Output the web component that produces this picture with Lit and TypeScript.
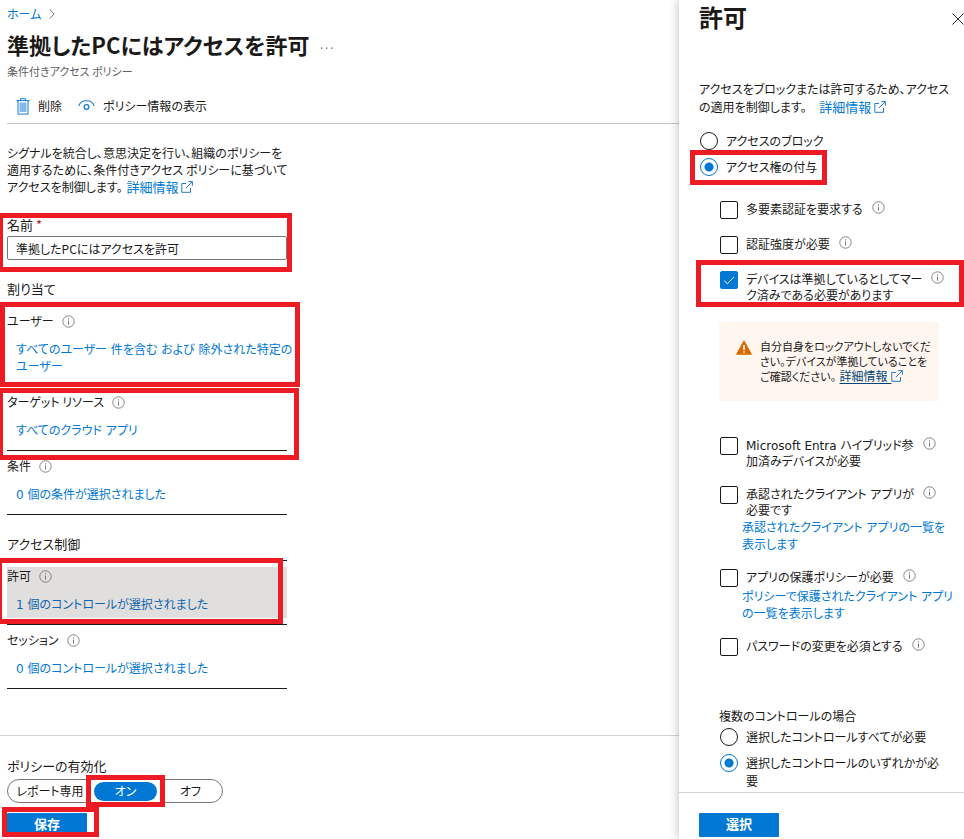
import { LitElement, html, css } from "lit";
import { customElement, property } from "lit/decorators.js";

const infoIcon = html`<svg class="info" width="13" height="13" viewBox="0 0 13 13" aria-hidden="true">
  <circle cx="6.5" cy="6.5" r="5.7" fill="none" stroke="#7a7876" stroke-width="0.9" />
  <rect x="6" y="5.6" width="1" height="4" fill="#7a7876" />
  <rect x="6" y="3.3" width="1" height="1.2" fill="#7a7876" />
</svg>`;

const outIcon = html`<svg class="out" width="12" height="12" viewBox="0 0 12 12" aria-hidden="true">
  <path d="M5 2.5H0.8V11.3H9.5V7M7.3 0.6H11.4V4.7M11.2 0.8L4.8 7.2" fill="none" stroke="#0f6cbd" stroke-width="0.9" />
</svg>`;

const shared = css`
  * {
    box-sizing: border-box;
  }
  .info,
  .out {
    flex: none;
    vertical-align: -1px;
  }
  a {
    color: #0078d4;
    text-decoration: none;
  }
  .more {
    margin-left: 4px;
    font-size: 13px;
  }
  p,
  h1,
  h2,
  h3 {
    margin: 0;
  }
  button,
  input {
    font: inherit;
    font-feature-settings: inherit;
    margin: 0;
  }
  button {
    border: 0;
    padding: 0;
    background: none;
    color: inherit;
  }
  .mark {
    position: absolute;
    border: 5px solid #ed1c24;
    pointer-events: none;
    z-index: 2;
  }
  .primary {
    width: 80px;
    height: 24px;
    padding-bottom: 2px;
    background: #0078d4;
    color: #fff;
    font-size: 13px;
    font-weight: 700;
    border-radius: 1px;
  }
`;

@customElement("policy-item")
class PolicyItem extends LitElement {
  @property() label = "";
  @property({ type: Boolean }) active = false;

  static styles = [
    shared,
    css`
      :host {
        display: block;
        padding: 6px 0;
        border-bottom: 1px solid #1b1a19;
        position: relative;
      }
      .box {
        padding-bottom: 4px;
      }
      .active {
        background: #e1dfdd;
      }
      .head {
        display: flex;
        align-items: center;
        gap: 8px;
        height: 18px;
      }
      .value {
        padding: 12px 0 0 9px;
        line-height: 17px;
        color: #0078d4;
        font-family: "DejaVu Sans", "Noto Sans CJK JP", sans-serif;
      }
    `,
  ];

  render() {
    return html`<div class="box ${this.active ? "active" : ""}">
        <div class="head"><span>${this.label}</span>${infoIcon}</div>
        <div class="value"><slot></slot></div>
      </div>
      <slot name="mark"></slot>`;
  }
}

@customElement("policy-page")
class PolicyPage extends LitElement {
  static styles = [
    shared,
    css`
      :host {
        display: flex;
        flex-direction: column;
        min-width: 0;
      }
      nav {
        display: flex;
        align-items: center;
        gap: 8px;
        height: 28px;
        padding-left: 7px;
      }
      .title {
        display: flex;
        align-items: center;
        gap: 12px;
        height: 34px;
        padding: 0 0 2px 7px;
      }
      h1 {
        font-size: 22px;
        font-weight: 700;
        line-height: 32px;
      }
      .sub {
        padding-left: 7px;
        font-size: 11px;
        line-height: 18px;
        color: #605e5c;
      }
      .tools {
        display: flex;
        gap: 16px;
        height: 44px;
        margin-left: 7px;
        padding: 8px 0 0 9px;
        border-bottom: 1px solid #c8c6c4;
      }
      .tools button {
        display: flex;
        align-items: center;
        gap: 8px;
        height: 36px;
      }
      .content {
        flex: 1;
        width: 280px;
        margin-left: 7px;
        padding-top: 20px;
      }
      .intro {
        line-height: 17px;
      }
      .field {
        position: relative;
        padding-top: 21px;
      }
      .field label {
        display: block;
        height: 20px;
        font-size: 13px;
        line-height: 18px;
      }
      .req {
        color: #a4262c;
      }
      .field input {
        display: block;
        width: 100%;
        height: 24px;
        padding: 0 8px;
        border: 1px solid #7a7876;
        border-radius: 2px;
        color: #1b1a19;
      }
      h2 {
        padding: 20px 0 7px;
        font-size: 13px;
        font-weight: 400;
        line-height: 18px;
        border-bottom: 1px solid #1b1a19;
      }
      .active-link {
        color: #1066b0;
      }
      footer {
        padding: 21px 0 2px 7px;
        border-top: 1px solid #d6d4d2;
      }
      .legend {
        font-size: 13px;
        line-height: 18px;
      }
      .pill {
        display: flex;
        align-items: center;
        gap: 2px;
        width: 216px;
        height: 24px;
        margin: 4px 0 10px;
        border: 1px solid #7a7876;
        border-radius: 12px;
      }
      .pill button {
        flex: 1;
        height: 19px;
        border-radius: 10px;
      }
      .pill .report {
        flex: none;
        width: 84px;
      }
      .pill .on {
        background: #0078d4;
        color: #fff;
      }
      .slot {
        position: relative;
        display: flex;
        flex: 1;
      }
      .save {
        position: relative;
        width: 80px;
      }
      .m-name {
        inset: 18px -5px -12px -9px;
      }
      .m-users {
        inset: -4px -13px -1px -7px;
      }
      .m-target {
        inset: 1px -12px -10px -9px;
      }
      .m-grant {
        inset: -3px 4px 0 -10px;
      }
      .m-on {
        inset: -7px -8px -6px -8px;
      }
      .m-save {
        inset: -6px -12px 0 -5px;
      }
    `,
  ];

  render() {
    return html`
      <nav>
        <a href="#">ホーム</a>
        <svg width="6" height="10" viewBox="0 0 6 10" aria-hidden="true">
          <path d="M0.7 0.5L5.2 5L0.7 9.5" fill="none" stroke="#605e5c" stroke-width="0.9" />
        </svg>
      </nav>
      <div class="title">
        <h1>準拠したPCにはアクセスを許可</h1>
        <button aria-label="その他">
          <svg width="12" height="2" viewBox="0 0 12 2" aria-hidden="true">
            <path d="M0 0.5h1.4v1.2H0zM5 0.5h1.4v1.2H5zM10 0.5h1.4v1.2H10z" fill="#605e5c" />
          </svg>
        </button>
      </div>
      <p class="sub">条件付きアクセス ポリシー</p>
      <div class="tools">
        <button>
          <svg width="14" height="17" viewBox="0 0 14 17" aria-hidden="true">
            <path d="M3.5 4.5h7v9.5h-7z" fill="#83b9e8" />
            <path d="M0.5 2.6h13M4.5 2.4V0.7h5v1.7M2 2.6v13.5h10V2.6" fill="none" stroke="#0f7cd4" stroke-width="1" />
          </svg>
          削除
        </button>
        <button>
          <svg width="17" height="12" viewBox="0 0 17 12" aria-hidden="true">
            <path d="M0.8 6C1.8 2.3 4.8 0.7 8.5 0.7S15.2 2.3 16.2 6" fill="none" stroke="#0f7cd4" stroke-width="1.1" />
            <circle cx="8.5" cy="7" r="2.4" fill="none" stroke="#0f7cd4" stroke-width="1.2" />
          </svg>
          ポリシー情報の表示
        </button>
      </div>
      <div class="content">
        <p class="intro">
          シグナルを統合し、意思決定を行い、組織のポリシーを<br />適用するために、条件付きアクセス ポリシーに基づいて<br />アクセスを制御します。<a class="more" href="#">詳細情報 ${outIcon}</a>
        </p>
        <div class="field">
          <label for="name">名前 <span class="req">*</span></label>
          <input id="name" type="text" value="準拠したPCにはアクセスを許可" />
          <span class="mark m-name"></span>
        </div>
        <h2>割り当て</h2>
        <policy-item label="ユーザー">
          <a href="#">すべてのユーザー 件を含む および 除外された特定の<br />ユーザー</a>
          <span slot="mark" class="mark m-users"></span>
        </policy-item>
        <policy-item label="ターゲット リソース">
          <a href="#">すべてのクラウド アプリ</a>
          <span slot="mark" class="mark m-target"></span>
        </policy-item>
        <policy-item label="条件"><a href="#">0 個の条件が選択されました</a></policy-item>
        <h2>アクセス制御</h2>
        <policy-item label="許可" active>
          <a class="active-link" href="#">1 個のコントロールが選択されました</a>
          <span slot="mark" class="mark m-grant"></span>
        </policy-item>
        <policy-item label="セッション"><a href="#">0 個のコントロールが選択されました</a></policy-item>
      </div>
      <footer>
        <div class="legend" id="enable">ポリシーの有効化</div>
        <div class="pill" role="group" aria-labelledby="enable">
          <button class="report">レポート専用</button>
          <span class="slot"><button class="on" aria-pressed="true">オン</button><span class="mark m-on"></span></span>
          <button>オフ</button>
        </div>
        <div class="save">
          <button class="primary">保存</button>
          <span class="mark m-save"></span>
        </div>
      </footer>
    `;
  }
}

@customElement("grant-panel")
class GrantPanel extends LitElement {
  static styles = [
    shared,
    css`
      :host {
        display: flex;
        flex-direction: column;
        background: #fff;
        box-shadow: 0 0 10px rgba(0, 0, 0, 0.28);
        position: relative;
      }
      header {
        display: flex;
        justify-content: space-between;
        align-items: center;
        height: 38px;
        padding-left: 20px;
      }
      header button {
        display: flex;
      }
      h2 {
        font-size: 24px;
        font-weight: 700;
        line-height: 34px;
        padding-bottom: 4px;
      }
      .body {
        flex: 1;
        padding: 42px 0 0 20px;
      }
      .intro {
        line-height: 18px;
      }
      .intro .more {
        margin-left: 10px;
      }
      .row {
        position: relative;
        display: grid;
        grid-template-columns: 18px 1fr;
        column-gap: 8px;
        line-height: 16px;
      }
      .choice {
        min-height: 26px;
        line-height: 18px;
      }
      .row input {
        appearance: none;
        grid-area: 1 / 1;
        width: 18px;
        height: 18px;
        border: 1px solid #1b1a19;
        background: #fff;
      }
      .row input[type="radio"] {
        border-radius: 50%;
      }
      .row input[type="radio"]:checked {
        border-color: #0078d4;
        background: radial-gradient(circle, #0078d4 4px, #fff 5px);
      }
      .row input[type="checkbox"] {
        border-radius: 2px;
      }
      .row input[type="checkbox"]:checked {
        border-color: #0078d4;
        background: #0078d4;
      }
      .tick {
        grid-area: 1 / 1;
        pointer-events: none;
        z-index: 1;
      }
      .text {
        display: flex;
        gap: 9px;
        grid-column: 2;
      }
      .text label {
        padding-top: 1px;
      }
      .modes {
        margin: 16px 0 0 1px;
      }
      .checks {
        margin: 17px 0 0 21px;
        font-family: "DejaVu Sans", "Noto Sans CJK JP", sans-serif;
      }
      .check {
        height: 18px;
        margin-bottom: 17px;
      }
      .double {
        height: 32px;
      }
      .list {
        display: block;
        margin: 0 0 15px 22px;
        padding-top: 2px;
        line-height: 17px;
      }
      .listed {
        margin-bottom: 0;
      }
      .warn {
        display: flex;
        gap: 8px;
        width: 220px;
        margin: 19px 0 36px -1px;
        padding: 18px 0 16px 17px;
        background: #fff6f0;
        border-radius: 2px;
        font-size: 11px;
        line-height: 15px;
      }
      .warn svg {
        flex: none;
      }
      .warn a {
        color: #004578;
        font-size: 12px;
      }
      .warn u {
        text-underline-offset: 2px;
      }
      .multi {
        margin: 51px 0 0 21px;
      }
      .multi h3 {
        font-size: 12px;
        font-weight: 400;
        line-height: 18px;
        margin: 0 0 3px -1px;
      }
      footer {
        padding: 20px 0 2px 20px;
        border-top: 1px solid #d6d4d2;
      }
      .m-mode {
        inset: -8px 137px -1px -10px;
      }
      .m-device {
        inset: -11px 0 -4px -24px;
      }
    `,
  ];

  private check(id: string, text: unknown, kind = "", checked = false, mark: unknown = null) {
    return html`<div class="row check ${kind}">
      <input type="checkbox" id=${id} ?checked=${checked} />
      ${checked
        ? html`<svg class="tick" width="18" height="18" viewBox="0 0 18 18" aria-hidden="true">
            <path d="M4.2 9.7L7.4 12.7L14 6" fill="none" stroke="#fff" stroke-width="1" />
          </svg>`
        : null}
      <div class="text"><label for=${id}>${text}</label>${infoIcon}</div>
      ${mark}
    </div>`;
  }

  render() {
    return html`
      <header>
        <h2>許可</h2>
        <button aria-label="閉じる">
          <svg width="12" height="12" viewBox="0 0 12 12" aria-hidden="true">
            <path d="M0.5 0.5L11.5 11.5M11.5 0.5L0.5 11.5" stroke="#323130" stroke-width="1" />
          </svg>
        </button>
      </header>
      <div class="body">
        <p class="intro">
          アクセスをブロックまたは許可するため、アクセス<br />の適用を制御します。
          <a class="more" href="#">詳細情報 ${outIcon}</a>
        </p>
        <div class="modes">
          <div class="row choice">
            <input type="radio" name="mode" id="block" />
            <label for="block">アクセスのブロック</label>
          </div>
          <div class="row choice">
            <input type="radio" name="mode" id="grant" checked />
            <label for="grant">アクセス権の付与</label>
            <span class="mark m-mode"></span>
          </div>
        </div>
        <div class="checks">
          ${this.check("mfa", "多要素認証を要求する")}
          ${this.check("strength", "認証強度が必要")}
          ${this.check(
            "device",
            html`デバイスは準拠しているとしてマー<br />ク済みである必要があります`,
            "double listed",
            true,
            html`<span class="mark m-device"></span>`
          )}
          <div class="warn">
            <svg width="16" height="15" viewBox="0 0 16 15" aria-hidden="true">
              <path d="M8 0.8L15.4 14.2H0.6Z" fill="#d96b05" stroke="#d96b05" stroke-width="1" stroke-linejoin="round" />
              <path d="M7.2 5h1.6v5H7.2zM7.2 11.2h1.6v1.6H7.2z" fill="#fff" />
            </svg>
            <p>
              自分自身をロックアウトしないでくだ<br />さい。デバイスが準拠していることを<br />ご確認ください。
              <a href="#"><u>詳細情報 </u>${outIcon}</a>
            </p>
          </div>
          ${this.check("hybrid", html`Microsoft Entra ハイブリッド参<br />加済みデバイスが必要`, "double")}
          ${this.check("client", html`承認されたクライアント アプリが<br />必要です`, "double listed")}
          <a class="list" href="#">承認されたクライアント アプリの一覧を<br />表示します</a>
          ${this.check("protect", "アプリの保護ポリシーが必要", "listed")}
          <a class="list" href="#">ポリシーで保護されたクライアント アプリ<br />の一覧を表示します</a>
          ${this.check("password", "パスワードの変更を必須とする", "listed")}
        </div>
        <div class="multi">
          <h3>複数のコントロールの場合</h3>
          <div class="row choice">
            <input type="radio" name="multi" id="all" />
            <label for="all">選択したコントロールすべてが必要</label>
          </div>
          <div class="row choice">
            <input type="radio" name="multi" id="any" checked />
            <label for="any">選択したコントロールのいずれかが必<br />要</label>
          </div>
        </div>
      </div>
      <footer><button class="primary">選択</button></footer>
    `;
  }
}

@customElement("app-root")
class AppRoot extends LitElement {
  static styles = css`
    :host {
      display: grid;
      grid-template-columns: minmax(0, 1fr) 285px;
      min-height: 100vh;
      overflow: hidden;
      background: #fff;
      color: #1b1a19;
      font-family: "Noto Sans CJK JP", sans-serif;
      font-size: 12px;
      line-height: 18px;
      font-feature-settings: "palt";
      white-space: nowrap;
    }
  `;

  render() {
    return html`<policy-page></policy-page><grant-panel></grant-panel>`;
  }
}
